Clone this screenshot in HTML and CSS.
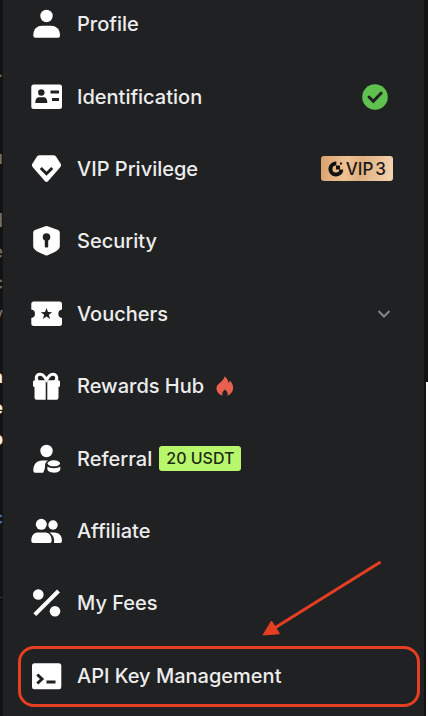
FILE: index.html
```html
<!DOCTYPE html>
<html lang="en">
<head>
<meta charset="utf-8">
<meta name="viewport" content="width=device-width, initial-scale=1">
<title>Account menu</title>
<link rel="stylesheet" href="styles.css">
</head>
<body>
<div class="page-edge page-edge-left" aria-hidden="true">
  <p><span>.</span></p>
  <p class="far"><span>u</span></p>
  <p><span>d</span><span>e</span><span>c</span><span>y</span></p>
  <p class="strong"><span>a</span><span>e</span><span>b</span></p>
  <p class="link"><span>c</span></p>
  <div class="rule"></div>
</div>
<nav class="panel" aria-label="Account">
  <ul class="menu">
    <li class="item"><a class="entry" href="#profile">
      <svg class="icon" viewBox="0 0 32 32"><circle cx="15.500" cy="8" r="6.200"/><path d="M2.300 27.500C2.300 21 6 17.700 11 17.700H20C25 17.700 29 21 29 27.500Q29 29.700 27 29.700H4.300Q2.300 29.700 2.300 27.500Z"/></svg>
      <span>Profile</span></a></li>
    <li class="item"><a class="entry" href="#identification">
      <svg class="icon" viewBox="0 0 32 32"><rect x=".3" y="3.500" width="30.700" height="24.500" rx="2.500"/><g class="cut"><circle cx="10.300" cy="11.500" r="3.200"/><path d="M4.300 22C4.300 18 6 16.300 8.500 16.300H12.300C15 16.300 16.300 18 16.300 22Z"/><path d="M19.500 9.500H28V12.500H19.500ZM21 17H28V20H21Z"/></g></svg>
      <span>Identification</span></a>
      <svg class="check" viewBox="0 0 36 26" role="img" aria-label="Verified"><circle cx="18" cy="13" r="12.800"/><path d="M12 13 L16.300 17.300 L24.200 9"/></svg></li>
    <li class="item"><a class="entry" href="#vip">
      <svg class="icon" viewBox="0 0 32 32"><path d="M8.500 2.300H22.500Q24 2.300 25 3.500L29.800 11Q30.600 12.600 29.400 14L17 28.200Q15.500 29.800 14 28.200L1.600 14Q.4 12.600 1.200 11L6 3.500Q7 2.300 8.500 2.300Z"/><path class="line" d="M9.800 15L15.500 20.700L21.200 15"/></svg>
      <span>VIP Privilege</span></a>
      <span class="vip"><svg viewBox="0 0 16 16"><path d="M8.300 2.600A5.500 5.500 0 1 0 13.400 8.500"/><path class="solid" d="M8 4.500H12V8.500H8ZM12 1.500H14V3.500H12Z"/></svg><span>VIP</span><span>3</span></span></li>
    <li class="item"><a class="entry" href="#security">
      <svg class="icon" viewBox="0 0 32 32"><path d="M14.300 1.300Q15.500.7 16.700 1.300L27 5Q28.800 5.800 28.800 7.500V21C28.800 25 24 27 16.700 30.200Q15.500 30.700 14.300 30.200C7 27 2.200 25 2.200 21V7.500Q2.200 5.800 4 5Z"/><g class="cut"><circle cx="15.500" cy="12" r="3.800"/><rect x="13.800" y="13" width="3.400" height="9.500" rx="1"/></g></svg>
      <span>Security</span></a></li>
    <li class="item"><a class="entry" href="#vouchers">
      <svg class="icon" viewBox="0 0 32 32"><path d="M2.800 3.500H28.500Q31 3.500 31 6V11.500A4.300 4.300 0 0 0 31 20V25.500Q31 28 28.500 28H2.800Q.3 28 .3 25.500V20A4.300 4.300 0 0 0 .3 11.500V6Q.3 3.500 2.800 3.500Z"/><path class="cut" d="M15.500 10L17 14L21.200 14.200L17.900 16.800L19.100 21L15.500 18.600L11.900 21L13.100 16.800L9.800 14.200L14 14Z"/></svg>
      <span>Vouchers</span></a>
      <svg class="chevron" viewBox="0 0 18 18" aria-hidden="true"><path d="M3.500 6L9 11.500L14.500 6"/></svg></li>
    <li class="item"><a class="entry" href="#rewards">
      <svg class="icon" viewBox="0 0 32 32"><path class="ribbon" d="M6.800 11.500C3.500 8 6 3.800 9.500 4.200C13 4.500 13.500 7 15.500 10C17.500 7 18 4.500 21.500 4.200C25 3.800 27.500 8 24.200 11.500"/><path d="M3.500 10.200H14.700V29.800H5.500Q3.500 29.800 3.500 27.800V17Q2 17 2 15.500V11.700Q2 10.200 3.500 10.200ZM16.300 10.200H27.500Q29 10.200 29 11.700V15.500Q29 17 27.500 17V27.800Q27.500 29.800 25.500 29.800H16.300Z"/></svg>
      <span>Rewards Hub</span></a>
      <svg class="flame" viewBox="0 0 18 20" aria-hidden="true"><path d="M8.800.3C10.300 2.300 12.400 3.800 12.300 6.700C13.300 6.400 13.700 5.500 13.700 4.500C16.500 7.300 17.500 10 17 13C16.500 16.500 14 18.700 11.500 19.700C12.300 17.500 11.300 15.500 9 13.500C6.500 15.500 5.700 17.500 6.500 19.700C3.500 18.700.8 16.400.5 13C.2 9.500 2.500 8.300 4.500 6.300C6.500 4.500 8 3 8.800.3Z"/></svg></li>
    <li class="item"><a class="entry" href="#referral">
      <svg class="icon" viewBox="0 0 32 32"><circle cx="15.500" cy="8" r="6.200"/><path d="M2.300 27.500C2.300 21 6 17.500 11 17.500H17C14.500 19 14 20.500 14 23.500Q14 26 13 27.500Q12.500 29.700 12 29.700H4.300Q2.300 29.700 2.300 27.500Z"/><ellipse cx="22.800" cy="20.300" rx="6.200" ry="3"/><path d="M16.400 23.500C19 25.700 26.800 25.700 29.300 23.500V26.300C29 30.800 17 30.800 16.400 26.300Z"/></svg>
      <span>Referral</span></a>
      <span class="reward">20 USDT</span></li>
    <li class="item"><a class="entry" href="#affiliate">
      <svg class="icon" viewBox="0 0 32 32"><circle cx="10.300" cy="9.300" r="5.500"/><circle cx="22" cy="10" r="4.700"/><path d="M.3 26C.3 20 3 17.500 7.500 17.500H13.300C18 17.500 20.700 20 20.700 26Q20.700 28 18.700 28H2.300Q.3 28 .3 26ZM18.500 17.500H23C28.500 17.500 31 21 31 26Q31 28 29 28H23Q24 21 18.500 17.500Z"/></svg>
      <span>Affiliate</span></a></li>
    <li class="item"><a class="entry" href="#fees">
      <svg class="icon" viewBox="0 0 32 32"><circle cx="7.300" cy="7.500" r="5.300"/><circle cx="24" cy="24.300" r="5.300"/><path class="slash" d="M3.800 27.700L27.500 4"/></svg>
      <span>My Fees</span></a></li>
    <li class="item highlighted"><a class="entry" href="#api">
      <svg class="icon" viewBox="0 0 32 32"><rect x="1" y="3.200" width="29.300" height="26" rx="2.500"/><path class="line" d="M6.300 14.500L11 19L6.300 23.500M15.500 22H24.500"/></svg>
      <span>API Key Management</span></a>
      <svg class="arrow" viewBox="0 0 120 76" aria-hidden="true"><path d="M118.500 2L11 69"/><path class="tip" d="M1 75L9.500 61L17.500 73.700Z"/></svg></li>
  </ul>
</nav>
<div class="page-edge page-edge-right" aria-hidden="true"></div>
</body>
</html>
```
FILE: styles.css
```css
* { box-sizing: border-box; }

body {
  margin: 0;
  min-height: 100vh;
  display: grid;
  grid-template-columns: 3px 1fr 4px;
  background: #131313;
  color: #ededed;
  font-family: Inter, "Liberation Sans", sans-serif;
}

.page-edge {
  height: 100vh;
  overflow: hidden;
}

.page-edge-left {
  padding-top: 24px;
  font-size: 18px;
  line-height: 31px;
  color: #777;
}

.page-edge-left p { margin: 32px 0 0; }
.page-edge-left p:first-child { margin-top: 31px; }
.page-edge-left .far { margin-top: 56px; }

.page-edge-left span {
  display: flex;
  justify-content: flex-end;
}

.page-edge-left .strong { color: #f0f0f0; font-weight: 700; }
.page-edge-left .link { margin-top: 48px; color: #4a7fd8; }
.page-edge-left .rule { height: 1px; margin-top: 64px; background: #333; }

/* The page behind turns from dark to white part way down. */
.page-edge-right {
  margin-left: 2px;
  background: linear-gradient(#131313 382px, #fff 382px);
}

.panel {
  height: 100vh;
  overflow: hidden;
  background: #202123;
}

/* The list is scrolled a little, so the first row starts above the panel. */
.menu {
  display: grid;
  grid-auto-rows: 1fr;
  height: calc(100vh + 8px);
  margin: -12px 0 0;
  padding: 0 31px 0 28px;
  list-style: none;
}

.item {
  display: flex;
  align-items: center;
}

.entry {
  display: flex;
  align-items: center;
  gap: 14px;
  color: inherit;
  font-size: 20px;
  font-weight: 500;
  line-height: 28px;
  text-decoration: none;
  white-space: nowrap;
}

.icon {
  flex: none;
  width: 32px;
  height: 32px;
  fill: #fff;
}

.icon .cut { fill: #202123; }
.icon .line { fill: none; stroke: #202123; stroke-width: 3; }
.icon .ribbon { fill: none; stroke: #fff; stroke-width: 3; }
.icon .slash { stroke: #fff; stroke-width: 4; }

.check {
  width: 36px;
  height: 26px;
  margin-left: auto;
  fill: #5fc14e;
}

.check path {
  fill: none;
  stroke: #202123;
  stroke-width: 3;
  stroke-linecap: round;
}

.vip {
  display: flex;
  align-items: center;
  gap: 2px;
  height: 25px;
  margin-left: auto;
  padding: 0 7px;
  border-radius: 3px;
  background: linear-gradient(100deg, #d9a06c, #eec193 35%, #dfaf81 55%, #f5d6b1);
  color: #1b1714;
  font-size: 17px;
  font-weight: 500;
}

.vip svg { width: 16px; height: 16px; }
.vip path { fill: none; stroke: #111; stroke-width: 4; }
.vip .solid { fill: #111; stroke: none; }

.chevron {
  width: 18px;
  height: 18px;
  margin-left: auto;
  fill: none;
  stroke: #85878a;
  stroke-width: 2;
}

.flame {
  width: 18px;
  height: 20px;
  margin-left: 12px;
  fill: #e9604f;
}

.reward {
  margin-left: 7px;
  padding: 0 7px;
  border-radius: 3px;
  background: #b8f66b;
  color: #1d2a14;
  font-size: 16px;
  font-weight: 500;
  line-height: 25px;
}

.highlighted { position: relative; }

.highlighted::before {
  content: "";
  position: absolute;
  inset: 6px -27px 5px -13px;
  border: 3px solid #e63e22;
  border-radius: 16px;
  pointer-events: none;
}

.arrow {
  position: absolute;
  right: 11px;
  bottom: calc(100% + 4px);
  width: 120px;
  height: 76px;
  fill: none;
  stroke: #e63e22;
  stroke-width: 3;
}

.arrow .tip { fill: #e63e22; stroke-width: 1; }
```
